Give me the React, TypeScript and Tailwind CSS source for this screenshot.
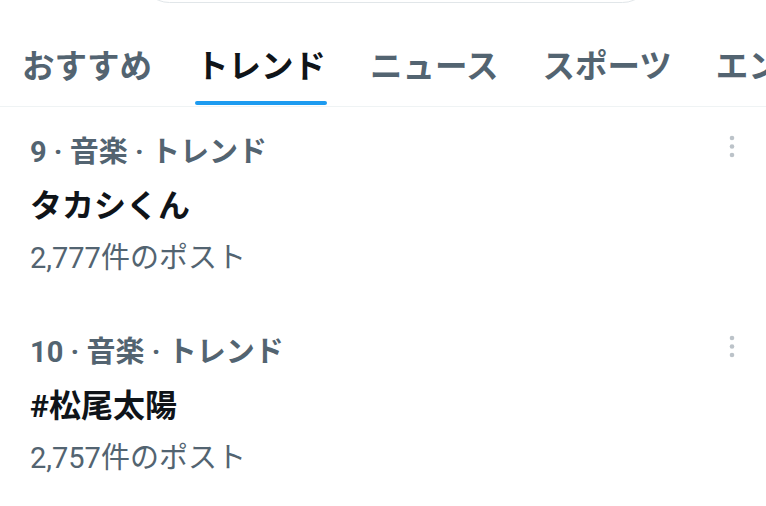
const tabs = ["おすすめ", "トレンド", "ニュース", "スポーツ", "エンタメ"];

const trends = [
  { rank: 9, category: "音楽", name: "タカシくん", posts: "2,777" },
  { rank: 10, category: "音楽", name: "#松尾太陽", posts: "2,757" },
];

function MoreIcon() {
  return (
    <svg width="8" height="26" viewBox="0 0 8 26" className="fill-[#bcc3c9]">
      <circle cx="4" cy="4" r="2.3" />
      <circle cx="4" cy="12.5" r="2.3" />
      <circle cx="4" cy="21" r="2.3" />
    </svg>
  );
}

export default function App() {
  return (
    <div
      className="w-[766px] h-[506px] overflow-hidden bg-white"
      style={{ fontFamily: '"Roboto", "Noto Sans CJK JP", sans-serif' }}
    >
      {/* Search box edge */}
      <div className="h-[4px] overflow-hidden">
        <div className="-mt-[56px] h-[59px] ml-[140px] w-[512px] rounded-full border border-[#e1e6e9] bg-white" />
      </div>

      {/* Tabs */}
      <div className="flex h-[103px] border-b border-[#eff3f4] whitespace-nowrap overflow-hidden">
        {tabs.map((tab, i) => (
          <div
            key={tab}
            className={
              "relative flex shrink-0 items-center px-[22px] pt-[24px] text-[32.5px] font-bold leading-[40px] " +
              (i === 1 ? "text-[#0f1419]" : "text-[#536471]")
            }
          >
            {tab}
            {i === 1 && (
              <div className="absolute bottom-[1px] left-[21px] right-[21px] h-[4px] rounded-full bg-[#1d9bf0]" />
            )}
          </div>
        ))}
      </div>

      {/* Trends */}
      {trends.map((trend) => (
        <div key={trend.name} className="pl-[30px] pr-[30px] pt-[27px] pb-[31px]">
          <div className="flex items-start justify-between">
            <p className="text-[29px] font-bold leading-[36px] text-[#536471]">
              {trend.rank} · {trend.category} · トレンド
            </p>
            <MoreIcon />
          </div>
          <p className="mt-[16px] text-[32px] font-bold leading-[40px] text-[#0f1419]">
            {trend.name}
          </p>
          <p className="mt-[14px] text-[29px] leading-[36px] text-[#536471]">
            {trend.posts}件のポスト
          </p>
        </div>
      ))}
    </div>
  );
}
